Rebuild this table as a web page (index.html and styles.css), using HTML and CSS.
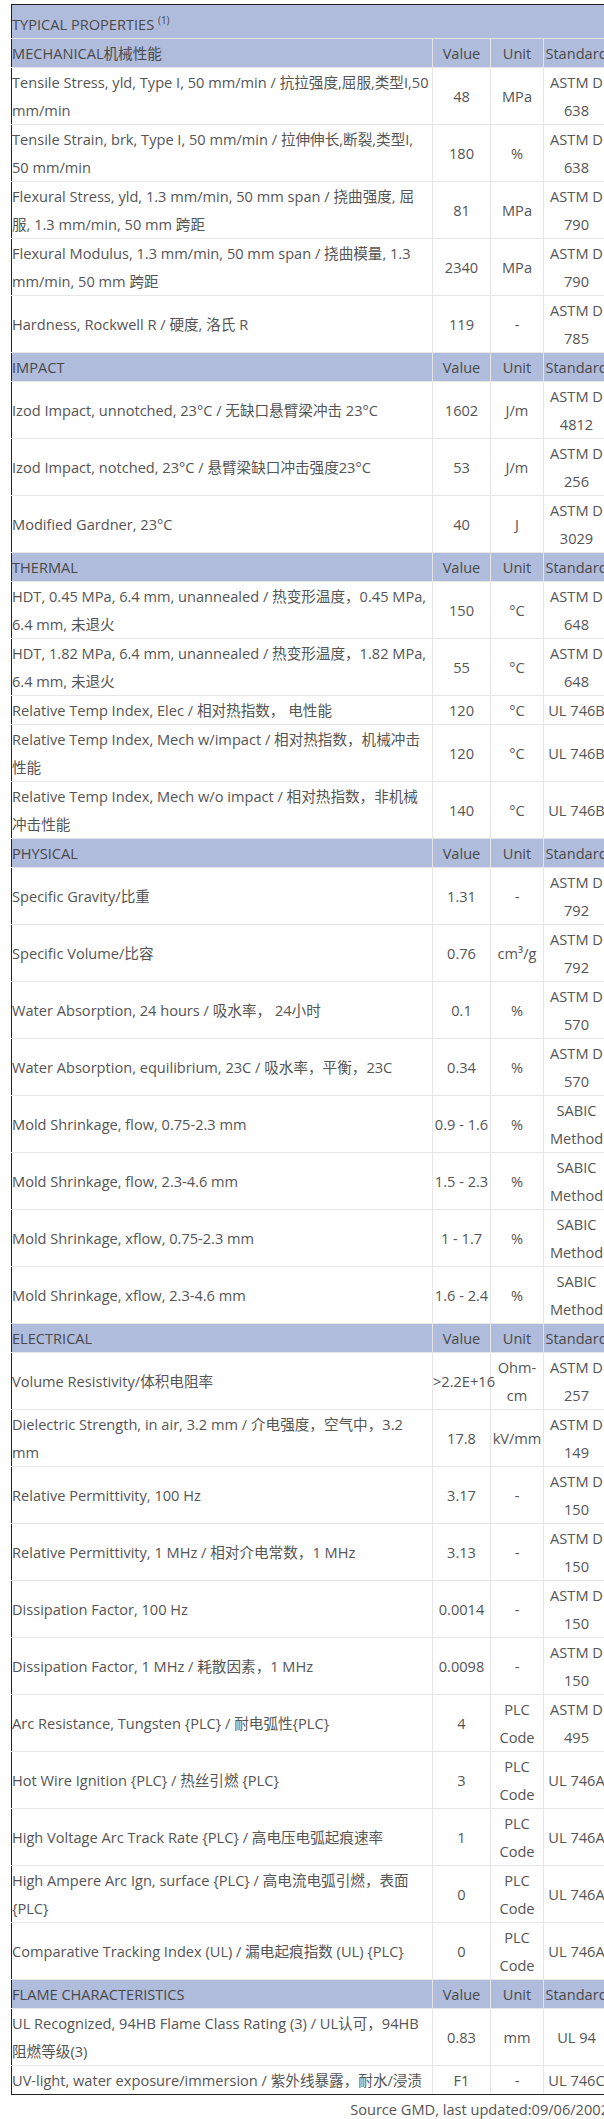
FILE: index.html
```html
<!DOCTYPE html>
<html lang="zh-CN">
<head>
  <meta charset="UTF-8">
  <meta name="viewport" content="width=device-width,initial-scale=1.0">
  <title>Typical Properties</title>
  <link rel="stylesheet" href="styles.css">
</head>
<body>
  <div class="container">
    <table class="props">
      <colgroup>
        <col class="col-desc">
        <col class="col-val">
        <col class="col-unit">
        <col class="col-std">
      </colgroup>
      <tr class="title">
        <td colspan="4">TYPICAL PROPERTIES <sup>(1)</sup></td>
      </tr>

      <!-- 机械性能 -->
      <tr class="head">
        <td class="desc">MECHANICAL机械性能</td><td>Value</td><td>Unit</td><td>Standard</td>
      </tr>
      <tr><td class="desc">Tensile Stress, yld, Type I, 50 mm/min / 抗拉强度,屈服,类型I,50 mm/min</td><td>48</td><td>MPa</td><td>ASTM D 638</td></tr>
      <tr><td class="desc">Tensile Strain, brk, Type I, 50 mm/min / 拉伸伸长,断裂,类型I, 50 mm/min</td><td>180</td><td>%</td><td>ASTM D 638</td></tr>
      <tr><td class="desc">Flexural Stress, yld, 1.3 mm/min, 50 mm span / 挠曲强度, 屈服, 1.3 mm/min, 50 mm 跨距</td><td>81</td><td>MPa</td><td>ASTM D 790</td></tr>
      <tr><td class="desc">Flexural Modulus, 1.3 mm/min, 50 mm span / 挠曲模量, 1.3 mm/min, 50 mm 跨距</td><td>2340</td><td>MPa</td><td>ASTM D 790</td></tr>
      <tr><td class="desc">Hardness, Rockwell R / 硬度, 洛氏 R</td><td>119</td><td>-</td><td>ASTM D 785</td></tr>

      <!-- 冲击 -->
      <tr class="head">
        <td class="desc">IMPACT</td><td>Value</td><td>Unit</td><td>Standard</td>
      </tr>
      <tr><td class="desc">Izod Impact, unnotched, 23°C / 无缺口悬臂梁冲击 23°C</td><td>1602</td><td>J/m</td><td>ASTM D 4812</td></tr>
      <tr><td class="desc">Izod Impact, notched, 23°C / 悬臂梁缺口冲击强度23°C</td><td>53</td><td>J/m</td><td>ASTM D 256</td></tr>
      <tr><td class="desc">Modified Gardner, 23°C</td><td>40</td><td>J</td><td>ASTM D 3029</td></tr>

      <!-- 热性能 -->
      <tr class="head">
        <td class="desc">THERMAL</td><td>Value</td><td>Unit</td><td>Standard</td>
      </tr>
      <tr><td class="desc">HDT, 0.45 MPa, 6.4 mm, unannealed / 热变形温度，0.45 MPa, 6.4 mm, 未退火</td><td>150</td><td>°C</td><td>ASTM D 648</td></tr>
      <tr><td class="desc">HDT, 1.82 MPa, 6.4 mm, unannealed / 热变形温度，1.82 MPa, 6.4 mm, 未退火</td><td>55</td><td>°C</td><td>ASTM D 648</td></tr>
      <tr><td class="desc">Relative Temp Index, Elec / 相对热指数， 电性能</td><td>120</td><td>°C</td><td>UL 746B</td></tr>
      <tr><td class="desc">Relative Temp Index, Mech w/impact / 相对热指数，机械冲击性能</td><td>120</td><td>°C</td><td>UL 746B</td></tr>
      <tr><td class="desc">Relative Temp Index, Mech w/o impact / 相对热指数，非机械冲击性能</td><td>140</td><td>°C</td><td>UL 746B</td></tr>

      <!-- 物理性能 -->
      <tr class="head">
        <td class="desc">PHYSICAL</td><td>Value</td><td>Unit</td><td>Standard</td>
      </tr>
      <tr><td class="desc">Specific Gravity/比重</td><td>1.31</td><td>-</td><td>ASTM D 792</td></tr>
      <tr><td class="desc">Specific Volume/比容</td><td>0.76</td><td>cm³/g</td><td>ASTM D 792</td></tr>
      <tr><td class="desc">Water Absorption, 24 hours / 吸水率， 24小时</td><td>0.1</td><td>%</td><td>ASTM D 570</td></tr>
      <tr><td class="desc">Water Absorption, equilibrium, 23C / 吸水率，平衡，23C</td><td>0.34</td><td>%</td><td>ASTM D 570</td></tr>
      <tr><td class="desc">Mold Shrinkage, flow, 0.75-2.3 mm</td><td>0.9 - 1.6</td><td>%</td><td>SABIC Method</td></tr>
      <tr><td class="desc">Mold Shrinkage, flow, 2.3-4.6 mm</td><td>1.5 - 2.3</td><td>%</td><td>SABIC Method</td></tr>
      <tr><td class="desc">Mold Shrinkage, xflow, 0.75-2.3 mm</td><td>1 - 1.7</td><td>%</td><td>SABIC Method</td></tr>
      <tr><td class="desc">Mold Shrinkage, xflow, 2.3-4.6 mm</td><td>1.6 - 2.4</td><td>%</td><td>SABIC Method</td></tr>

      <!-- 电性能 -->
      <tr class="head">
        <td class="desc">ELECTRICAL</td><td>Value</td><td>Unit</td><td>Standard</td>
      </tr>
      <tr><td class="desc">Volume Resistivity/体积电阻率</td><td>&gt;2.2E+16</td><td>Ohm-cm</td><td>ASTM D 257</td></tr>
      <tr><td class="desc">Dielectric Strength, in air, 3.2 mm / 介电强度，空气中，3.2 mm</td><td>17.8</td><td>kV/mm</td><td>ASTM D 149</td></tr>
      <tr><td class="desc">Relative Permittivity, 100 Hz</td><td>3.17</td><td>-</td><td>ASTM D 150</td></tr>
      <tr><td class="desc">Relative Permittivity, 1 MHz / 相对介电常数，1 MHz</td><td>3.13</td><td>-</td><td>ASTM D 150</td></tr>
      <tr><td class="desc">Dissipation Factor, 100 Hz</td><td>0.0014</td><td>-</td><td>ASTM D 150</td></tr>
      <tr><td class="desc">Dissipation Factor, 1 MHz / 耗散因素，1 MHz</td><td>0.0098</td><td>-</td><td>ASTM D 150</td></tr>
      <tr><td class="desc">Arc Resistance, Tungsten {PLC} / 耐电弧性{PLC}</td><td>4</td><td>PLC Code</td><td>ASTM D 495</td></tr>
      <tr><td class="desc">Hot Wire Ignition {PLC} / 热丝引燃 {PLC}</td><td>3</td><td>PLC Code</td><td>UL 746A</td></tr>
      <tr><td class="desc">High Voltage Arc Track Rate {PLC} / 高电压电弧起痕速率</td><td>1</td><td>PLC Code</td><td>UL 746A</td></tr>
      <tr><td class="desc">High Ampere Arc Ign, surface {PLC} / 高电流电弧引燃，表面 {PLC}</td><td>0</td><td>PLC Code</td><td>UL 746A</td></tr>
      <tr><td class="desc">Comparative Tracking Index (UL) / 漏电起痕指数 (UL) {PLC}</td><td>0</td><td>PLC Code</td><td>UL 746A</td></tr>

      <!-- 阻燃 -->
      <tr class="head">
        <td class="desc">FLAME CHARACTERISTICS</td><td>Value</td><td>Unit</td><td>Standard</td>
      </tr>
      <tr><td class="desc">UL Recognized, 94HB Flame Class Rating (3) / UL认可，94HB 阻燃等级(3)</td><td>0.83</td><td>mm</td><td>UL 94</td></tr>
      <tr><td class="desc">UV-light, water exposure/immersion / 紫外线暴露，耐水/浸渍</td><td>F1</td><td>-</td><td>UL 746C</td></tr>
    </table>
    <p class="source">Source GMD, last updated:09/06/2002</p>
  </div>
</body>
</html>
```
FILE: styles.css
```css
/* 全局样式 */
html, body {
  overflow-x: hidden;
}
body {
  margin: 0;
  padding: 0;
  background: #fff;
  font-family: "Open Sans", "Noto Sans CJK SC", sans-serif;
  font-size: 14.6px;
  color: #555;
}

.container {
  width: 598px;
  padding: 4px 0 0 11px;
}

/* 性能表 */
.props {
  width: 598px;
  table-layout: fixed;
  border-collapse: collapse;
  border-top: 1px solid #222;
  border-left: 1px solid #222;
  border-bottom: 1px solid #222;
}
.col-desc {
  width: 421px;
}
.col-val {
  width: 58px;
}
.col-unit {
  width: 53px;
}
.col-std {
  width: 66px;
}
.props td {
  padding: 0;
  line-height: 28px;
  text-align: center;
  vertical-align: middle;
  border: 1px solid #e6e6e6;
}
.props td.desc {
  padding-right: 2px;
  text-align: left;
}
.props tr:last-child td {
  border-bottom: 1px solid #222;
}
.props td:first-child {
  border-left: 1px solid #222;
}

/* 标题行和分类行 */
.title td {
  padding-top: 5px;
  text-align: left;
  background: #b0bcdc;
  color: #4a4a4a;
  border-top: 1px solid #222;
}
.title sup {
  font-size: 10px;
  line-height: 0;
}
.head td {
  background: #b0bcdc;
  color: #4a4a4a;
  white-space: nowrap;
  overflow: visible;
}

.source {
  margin: 0;
  line-height: 28px;
  text-align: right;
  color: #555;
}
```
